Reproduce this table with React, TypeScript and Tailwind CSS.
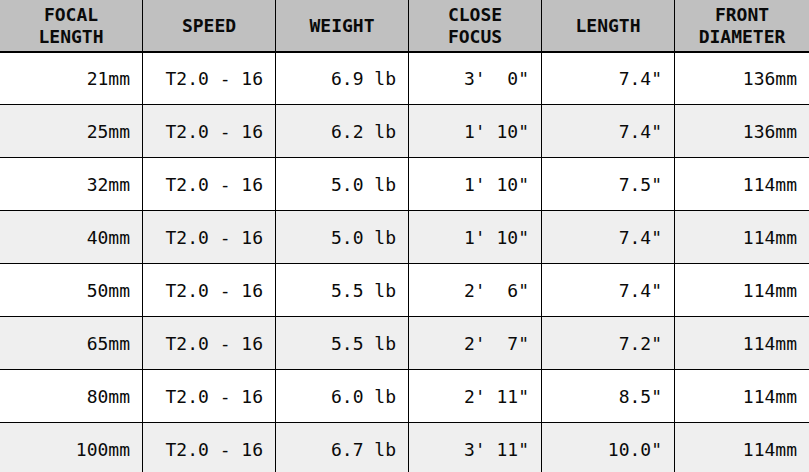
import React from 'react';

// lens spec table: header + 8 prime lenses
const headers = ['FOCAL\nLENGTH', 'SPEED', 'WEIGHT', 'CLOSE\nFOCUS', 'LENGTH', 'FRONT\nDIAMETER'];

const rows: string[][] = [
  ['21mm', 'T2.0 - 16', '6.9 lb', `3'  0"`, '7.4"', '136mm'],
  ['25mm', 'T2.0 - 16', '6.2 lb', `1' 10"`, '7.4"', '136mm'],
  ['32mm', 'T2.0 - 16', '5.0 lb', `1' 10"`, '7.5"', '114mm'],
  ['40mm', 'T2.0 - 16', '5.0 lb', `1' 10"`, '7.4"', '114mm'],
  ['50mm', 'T2.0 - 16', '5.5 lb', `2'  6"`, '7.4"', '114mm'],
  ['65mm', 'T2.0 - 16', '5.5 lb', `2'  7"`, '7.2"', '114mm'],
  ['80mm', 'T2.0 - 16', '6.0 lb', `2' 11"`, '8.5"', '114mm'],
  ['100mm', 'T2.0 - 16', '6.7 lb', `3' 11"`, '10.0"', '114mm'],
];

const cols = 'grid grid-cols-[143px_133px_133px_133px_133px_1fr]';

export default function App() {
  return (
    <div className="w-[809px] h-[472px] overflow-hidden bg-white text-[#0a0a0a] font-['DejaVu_Sans_Mono',monospace] text-[18px]">
      {/* header */}
      <div className={`${cols} h-[53px] bg-[#c0c0c0] border-b-2 border-black`}>
        {headers.map((h, i) => (
          <div
            key={i}
            className={`flex items-center justify-center text-center font-bold leading-[22px] whitespace-pre ${i < 5 ? 'border-r border-black' : ''}`}
          >
            {h}
          </div>
        ))}
      </div>
      {/* body */}
      {rows.map((r, ri) => (
        <div
          key={ri}
          className={`${cols} ${ri === 0 ? 'h-[52px]' : 'h-[53px]'} border-b border-black ${ri % 2 === 1 ? 'bg-[#efefef]' : 'bg-white'}`}
        >
          {r.map((c, ci) => (
            <div
              key={ci}
              className={`flex items-center justify-end pr-[12px] whitespace-pre ${ci < 5 ? 'border-r border-black' : ''}`}
            >
              {c}
            </div>
          ))}
        </div>
      ))}
    </div>
  );
}
